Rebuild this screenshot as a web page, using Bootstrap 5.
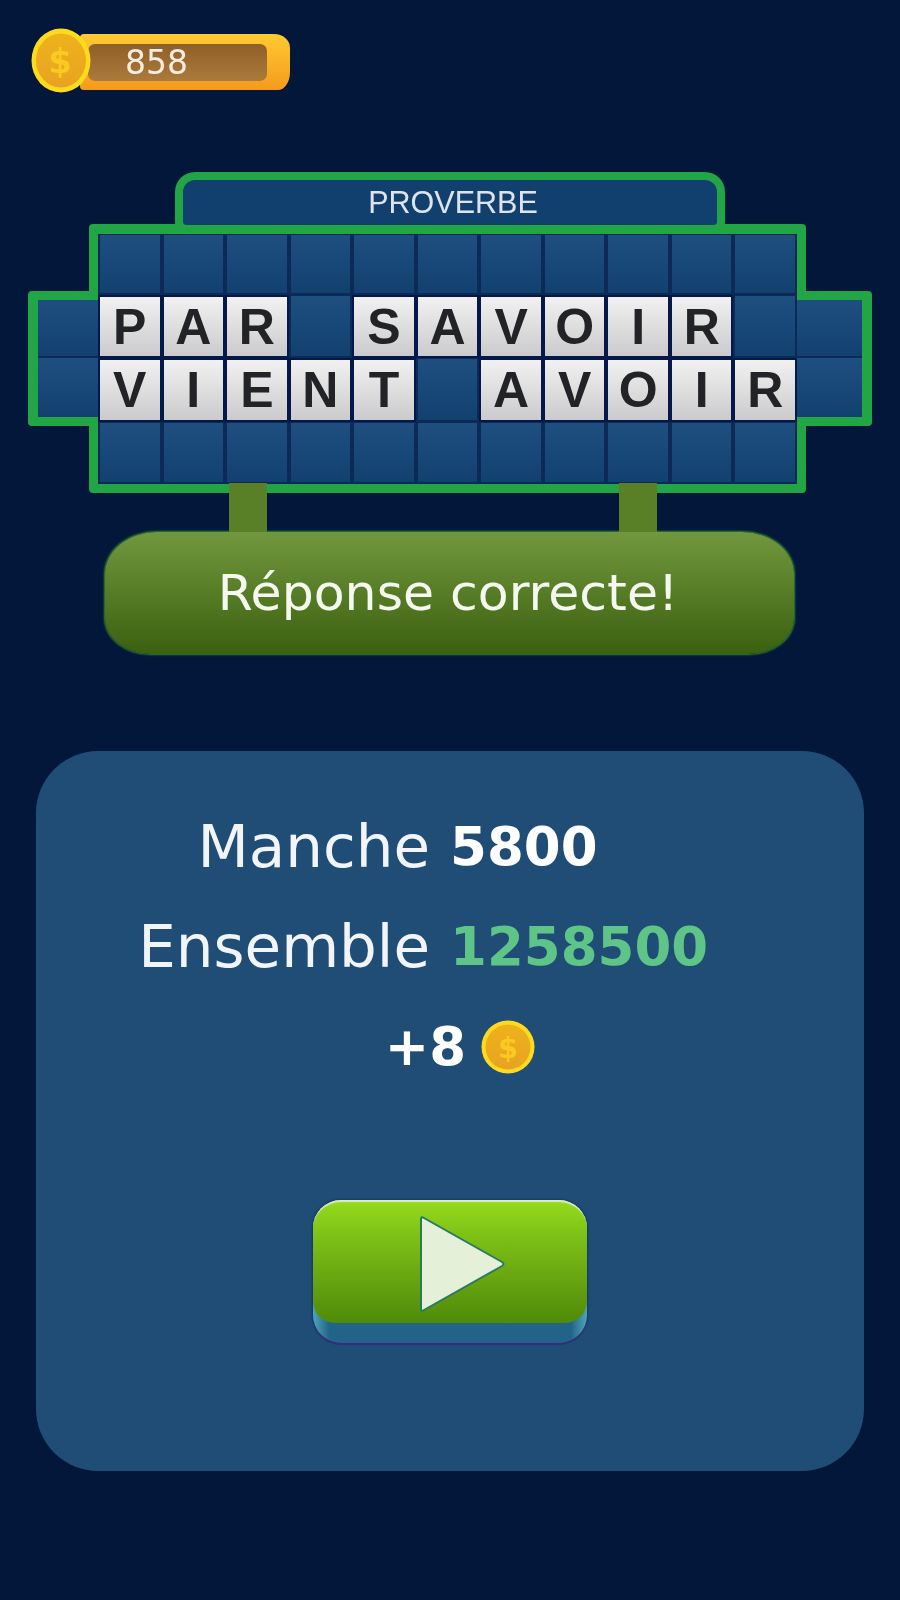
<!DOCTYPE html>
<html lang="fr">

<head>
    <meta charset="UTF-8">
    <meta name="viewport" content="width=device-width, initial-scale=1.0">
    <title>Réponse correcte</title>
    <link href="https://cdn.jsdelivr.net/npm/bootstrap@5.3.0/dist/css/bootstrap.min.css" rel="stylesheet">
    <style>
        body {
            background: #021739;
            color: #fff;
            font-family: "DejaVu Sans", sans-serif;
            min-height: 1600px;
        }

        .game-screen {
            width: 900px;
            height: 1600px;
            overflow: hidden;
            padding-top: 28px;
            filter: blur(0.6px);
        }

        /* wallet */
        .wallet {
            margin-left: 31px;
            height: 65px;
        }

        .coin-big {
            width: 60px;
            height: 65px;
            flex: none;
            position: relative;
            z-index: 1;
        }

        .wallet-bar {
            width: 210px;
            height: 56px;
            margin-left: -11px;
            margin-top: 6px;
            padding: 10px 23px 9px 8px;
            background: linear-gradient(#ffca33, #f59a1c);
            border-radius: 4px 16px 12px 4px / 4px 14px 18px 4px;
        }

        .wallet-amount {
            height: 100%;
            padding-left: 37px;
            background: linear-gradient(#8f5f28, #ab7a3c);
            border-radius: 7px;
            font-size: 33px;
            line-height: 38px;
            color: #f5ece0;
        }

        /* board */
        .board-wrap {
            isolation: isolate;
            margin-top: 79px;
        }

        .board-label {
            width: 550px;
            height: 62px;
            margin-left: 175px;
            background: #11406e;
            border: 8px solid #22a645;
            border-bottom-width: 9px;
            border-radius: 20px 20px 12px 12px;
            font-family: "Liberation Sans", sans-serif;
            font-size: 30.5px;
            line-height: 44px;
            color: #dde4ef;
            padding-left: 6px;
        }

        .board-grid {
            display: grid;
            grid-template-columns: 60px repeat(11, 63.55px) 65px;
            grid-template-rows: 61px 63px 64px 62px;
            margin-left: 38px;
            width: 824px;
        }

        .tile {
            position: relative;
            background: linear-gradient(#1e4f7e, #124170);
            border: 2px solid #0b2a57;
            border-top-width: 1px;
        }

        .tile::before {
            content: "";
            position: absolute;
            inset: -11px;
            background: #22a645;
            border-radius: 4px;
            z-index: -1;
        }

        .tile-col1 {
            grid-column-start: 1;
        }

        .tile-col2 {
            grid-column-start: 2;
        }

        .tile-side-top {
            margin-top: 5px;
            border: 0;
            border-bottom: 2px solid #0b2a57;
        }

        .tile-side-bottom {
            margin-bottom: 5px;
            border: 0;
        }

        .tile-side-top::before,
        .tile-side-bottom::before {
            inset: -9px -10px;
        }

        .tile-letter {
            background: linear-gradient(#f1f1f1, #cbcbcd);
            border: 2px solid #04194a;
            color: #222326;
            font-family: "Liberation Sans", sans-serif;
            font-weight: 700;
            font-size: 50px;
            line-height: 1;
        }

        .posts {
            height: 49px;
            margin-top: -1px;
            padding: 0 243px 0 229px;
        }

        .post {
            width: 38px;
            background: #5a8027;
            position: relative;
        }

        .answer-banner {
            width: 689px;
            height: 122px;
            margin-left: 105px;
            background: linear-gradient(#71983e, #3b600f);
            border-radius: 52px 52px 46px 46px / 42px 42px 36px 36px;
            box-shadow: 0 0 2px 1px #2b8a33;
            font-size: 50.5px;
            padding-right: 3px;
            color: #f4f8ef;
        }

        /* score panel */
        .score-panel {
            width: 828px;
            height: 720px;
            margin: 97px 0 0 36px;
            padding-top: 46px;
            background: #1f4d75;
            border-radius: 62px;
        }

        .score-row {
            height: 100px;
            gap: 20px;
        }

        .score-name {
            width: 394px;
            font-size: 59.5px;
            color: #f1f5fa;
        }

        .score-value {
            font-size: 53px;
            font-weight: 700;
        }

        .score-total {
            color: #5ec488;
        }

        .score-bonus {
            height: 100px;
            gap: 15px;
            font-size: 53px;
            font-weight: 700;
            padding-left: 20px;
        }

        .coin-small {
            width: 54px;
            height: 54px;
        }

        .play-btn {
            display: flex;
            flex-direction: column;
            justify-content: flex-start;
            width: 274px;
            height: 143px;
            margin: 103px auto 0;
            padding: 0;
            border: 0;
            border-radius: 28px;
            background: linear-gradient(90deg, #4ea6b4, #226389 6%, #226389 94%, #4ea6b4);
            box-shadow: 0 2px 0 #3b2a7c, 0 0 2px 1px #12396d;
        }

        .play-face {
            width: 100%;
            height: 123px;
            flex: none;
            border-radius: 28px 28px 22px 22px;
            background: linear-gradient(#96dc1e, #7dc016 30%, #508a0a);
            box-shadow: inset 0 3px 1px -1px #dfe9cf;
        }
    </style>
</head>

<body class="m-0">
    <div class="game-screen">
        <div class="wallet d-flex align-items-start">
            <svg class="coin-big" viewBox="0 0 60 65">
                <defs>
                    <linearGradient id="coinFill" x1="0" y1="0" x2="0" y2="1">
                        <stop offset="0" stop-color="#eeb21c" />
                        <stop offset="1" stop-color="#e8a322" />
                    </linearGradient>
                </defs>
                <ellipse cx="30" cy="32.5" rx="29.5" ry="32" fill="#ffdb1c" />
                <ellipse cx="30" cy="32.5" rx="25" ry="27" fill="url(#coinFill)" />
                <text x="29" y="45" text-anchor="middle" font-family="DejaVu Sans" font-weight="700" font-size="34" fill="#fbca20">$</text>
            </svg>
            <div class="wallet-bar">
                <div class="wallet-amount">858</div>
            </div>
        </div>

        <div class="board-wrap">
            <div class="board-label text-center">PROVERBE</div>
            <div class="board-grid" id="board"></div>
            <div class="posts d-flex justify-content-between">
                <div class="post"></div>
                <div class="post"></div>
            </div>
            <div class="answer-banner d-flex align-items-center justify-content-center">Réponse correcte!</div>
        </div>

        <div class="score-panel">
            <div class="score-row d-flex align-items-center">
                <div class="score-name text-end">Manche</div>
                <div class="score-value">5800</div>
            </div>
            <div class="score-row d-flex align-items-center">
                <div class="score-name text-end">Ensemble</div>
                <div class="score-value score-total">1258500</div>
            </div>
            <div class="score-bonus d-flex align-items-center justify-content-center">
                <span>+8</span>
                <svg class="coin-small" viewBox="0 0 54 54">
                    <circle cx="27" cy="27" r="26.5" fill="#ffdb1c" />
                    <circle cx="27" cy="27" r="22.5" fill="url(#coinFill)" />
                    <text x="27" y="38" text-anchor="middle" font-family="DejaVu Sans" font-weight="700" font-size="29" fill="#fbca20">$</text>
                </svg>
            </div>
            <button class="btn play-btn" type="button">
                <div class="play-face d-flex align-items-center justify-content-center">
                    <svg width="110" height="110" viewBox="0 0 110 110">
                        <path d="M26 12 Q26 9 29 11 L107 55 Q110 57 107 59 L29 103 Q26 105 26 102 Z" fill="#e4f0d8" stroke="#2a7a62" stroke-width="2" />
                    </svg>
                </div>
            </button>
        </div>
    </div>

    <script src="https://cdn.jsdelivr.net/npm/bootstrap@5.3.0/dist/js/bootstrap.bundle.min.js"></script>
    <script>
        // board rows, 13 columns; null = no tile (outside the frame), "" = empty tile
        const rows = [
            [null, "", "", "", "", "", "", "", "", "", "", "", null],
            ["", "P", "A", "R", "", "S", "A", "V", "O", "I", "R", "", ""],
            ["", "V", "I", "E", "N", "T", "", "A", "V", "O", "I", "R", ""],
            [null, "", "", "", "", "", "", "", "", "", "", "", null]
        ];

        const board = document.getElementById("board");
        rows.forEach((row, r) => {
            row.forEach((ch, c) => {
                if (ch === null) return;
                const tile = document.createElement("div");
                tile.className = "tile";
                if (c === 0) tile.classList.add("tile-col1");
                if (c === 1 && (r === 0 || r === 3)) tile.classList.add("tile-col2");
                if (c === 0 || c === 12) tile.classList.add(r === 1 ? "tile-side-top" : "tile-side-bottom");
                if (ch) {
                    tile.classList.add("tile-letter", "d-flex", "align-items-center", "justify-content-center");
                    tile.textContent = ch;
                }
                board.appendChild(tile);
            });
        });
    </script>
</body>

</html>
